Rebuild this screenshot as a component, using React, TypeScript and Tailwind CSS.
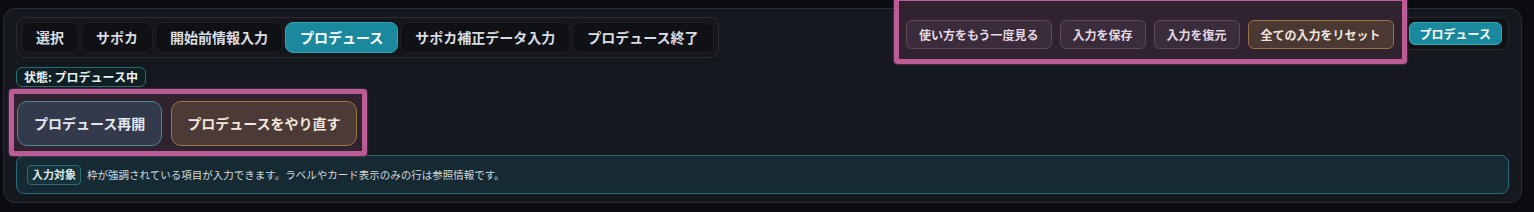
import type { ReactNode } from 'react';

const tabs = ['選択', 'サポカ', '開始前情報入力', 'プロデュース', 'サポカ補正データ入力', 'プロデュース終了'];
const activeTab = 'プロデュース';

const Highlight = ({ className }: { className: string }) => (
  <div
    className={`pointer-events-none absolute rounded-[4px] border-[5px] border-[#bb5c96] shadow-[0_0_2px_#bb5c96] ${className}`}
  />
);

const ToolButton = ({ children, tone = 'plain' }: { children: ReactNode; tone?: 'plain' | 'warn' }) => (
  <button
    type="button"
    className={`h-[29px] rounded-md border px-3 text-[12px] font-bold ${
      tone === 'warn'
        ? 'border-[#9a7244] bg-[#4a3833] text-[#f1e5dd]'
        : 'border-[#5b4959] bg-[#3a2c3a] text-[#e4d9e2]'
    }`}
  >
    {children}
  </button>
);

const App = () => {
  return (
    <div
      className="h-[212px] w-[1534px] bg-[#0a0c12] pt-2"
      style={{ fontFamily: '"Noto Sans CJK JP", "Noto Sans", sans-serif' }}
    >
      <section className="ml-[3px] flex h-[195px] w-[1519px] flex-col rounded-xl border border-[#2a2d34] bg-[#15181e] px-3 pt-2">
        <div className="flex items-start justify-between">
          <nav className="flex gap-[2px] rounded-[10px] border border-[#2a2c31] bg-[#15171c] p-[4px]">
            {tabs.map((tab) => (
              <button
                key={tab}
                type="button"
                className={`h-[31px] rounded-lg border px-[14px] text-[14px] font-bold ${
                  tab === activeTab
                    ? 'border-[#3aa6b6] bg-[#1b899d] text-white'
                    : 'border-[#1d2025] bg-[#0f1115] text-[#d9dce1]'
                }`}
              >
                {tab}
              </button>
            ))}
          </nav>

          <div className="flex items-center gap-2">
            <div className="relative">
              <div className="absolute -bottom-[15px] -left-3 -right-[13px] -top-[22px] bg-[#30222f]" />
              <div className="relative flex gap-[8px] pt-[2px]">
                <ToolButton>使い方をもう一度見る</ToolButton>
                <ToolButton>入力を保存</ToolButton>
                <ToolButton>入力を復元</ToolButton>
                <ToolButton tone="warn">全ての入力をリセット</ToolButton>
              </div>
              <Highlight className="-bottom-[15px] -left-3 -right-[13px] -top-[22px] z-10" />
            </div>
            <div className="rounded-lg border border-[#25282e] bg-[#101216] px-[6px] py-[4px]">
              <span className="flex h-[23px] items-center rounded-md border border-[#3aa6b6] bg-[#1b899d] px-[10px] text-[12px] font-bold text-white">
                プロデュース
              </span>
            </div>
          </div>
        </div>

        <div className="mt-[9px] flex">
          <span className="flex h-[20px] items-center rounded-md border border-[#2e6870] bg-[#0f2024] px-[7px] text-[12px] font-bold text-[#e6f1f2]">
            状態: プロデュース中
          </span>
        </div>

        <div className="relative mt-[14px] flex w-fit gap-[9px] pl-[1px]">
          <div className="absolute -bottom-[10px] -left-[7px] -right-[10px] -top-[12px] bg-[#30222f]" />
          <button
            type="button"
            className="relative h-[45px] rounded-[10px] border border-[#4d8596] bg-[#323a4c] px-4 text-[14px] font-bold text-[#e4e7ed]"
          >
            プロデュース再開
          </button>
          <button
            type="button"
            className="relative h-[45px] rounded-[10px] border border-[#9a7a42] bg-[#4b3a36] px-[15px] text-[14px] font-bold text-[#f2e6dd]"
          >
            プロデュースをやり直す
          </button>
          <Highlight className="-bottom-[10px] -left-[7px] -right-[10px] -top-[12px] z-10" />
        </div>

        <div className="mt-[9px] flex h-[39px] items-center gap-[6px] rounded-lg border border-[#2d6a78] bg-[#152a33] px-[10px]">
          <span className="flex h-[20px] items-center rounded-[4px] border border-[#2f6a73] bg-[#17323a] px-[4px] text-[11px] font-bold text-[#dbe9eb]">
            入力対象
          </span>
          <p className="text-[10.5px] text-[#d1d8dc]">
            枠が強調されている項目が入力できます。ラベルやカード表示のみの行は参照情報です。
          </p>
        </div>
      </section>
    </div>
  );
};

export default App;
